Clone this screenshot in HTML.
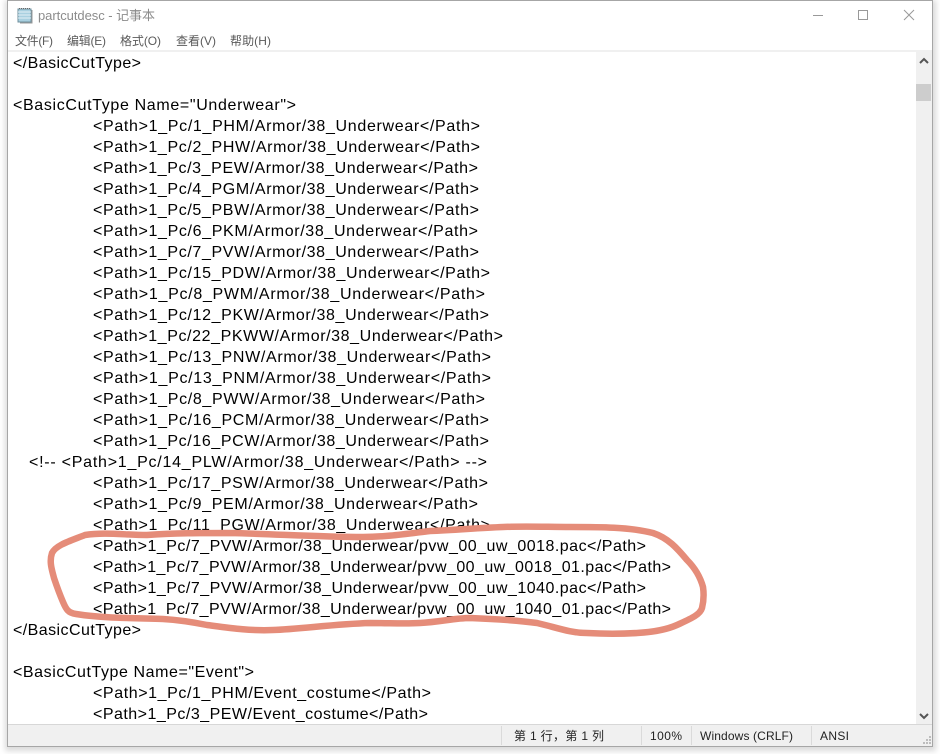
<!DOCTYPE html>
<html><head><meta charset="utf-8"><style>
html,body{margin:0;padding:0;width:940px;height:754px;overflow:hidden;background:#fff}
svg{position:absolute;left:0;top:0}
text{font-family:"Liberation Sans","Noto Sans CJK SC",sans-serif;white-space:pre}
.c{font-size:16px;fill:#000}
.m{font-size:12px;fill:#5a5a5a}
.s{font-size:12px;fill:#222}
</style></head><body>
<svg width="940" height="754" viewBox="0 0 940 754" xmlns="http://www.w3.org/2000/svg">
<defs><filter id="sh" x="-3%" y="-3%" width="106%" height="106%"><feGaussianBlur stdDeviation="3"/></filter></defs>
<rect x="5" y="0" width="931" height="751" fill="#bbb" opacity=".55" filter="url(#sh)"/>
<rect x="7.5" y="0.5" width="925" height="746" fill="#fff" stroke="#a6a6a6"/>
<rect x="8" y="50" width="924" height="2" fill="#f0f0f0"/>
<g>
<rect x="18" y="9" width="13" height="13" fill="#a9d0e0" stroke="#6f8f9c"/>
<path d="M18 12H31M18 15H31M18 18H31" stroke="#e4f1f6"/>
<path d="M19 8.5H30" stroke="#666" stroke-dasharray="1 1"/>
<path d="M32 10V23H20" stroke="#999" fill="none"/>
</g>
<text x="38" y="20" font-size="13" fill="#8c8c8c" textLength="117">partcutdesc - 记事本</text>
<path d="M813 15.5H823" stroke="#999"/>
<rect x="858.5" y="10.5" width="9" height="9" fill="none" stroke="#999"/>
<path d="M904 10L914 20M914 10L904 20" stroke="#999"/>
<text class="m" x="15" y="45" textLength="38">文件(F)</text>
<text class="m" x="67" y="45" textLength="39">编辑(E)</text>
<text class="m" x="120" y="45" textLength="41">格式(O)</text>
<text class="m" x="176" y="45" textLength="40">查看(V)</text>
<text class="m" x="230" y="45" textLength="41">帮助(H)</text>

<g transform="translate(0,1)">
<text class="c" x="13" y="67" textLength="128">&lt;/BasicCutType&gt;</text>
<text class="c" x="13" y="109" textLength="283">&lt;BasicCutType Name="Underwear"&gt;</text>
<text class="c" x="93" y="130" textLength="387">&lt;Path&gt;1_Pc/1_PHM/Armor/38_Underwear&lt;/Path&gt;</text>
<text class="c" x="93" y="151" textLength="387">&lt;Path&gt;1_Pc/2_PHW/Armor/38_Underwear&lt;/Path&gt;</text>
<text class="c" x="93" y="172" textLength="385">&lt;Path&gt;1_Pc/3_PEW/Armor/38_Underwear&lt;/Path&gt;</text>
<text class="c" x="93" y="193" textLength="386">&lt;Path&gt;1_Pc/4_PGM/Armor/38_Underwear&lt;/Path&gt;</text>
<text class="c" x="93" y="214" textLength="386">&lt;Path&gt;1_Pc/5_PBW/Armor/38_Underwear&lt;/Path&gt;</text>
<text class="c" x="93" y="235" textLength="385">&lt;Path&gt;1_Pc/6_PKM/Armor/38_Underwear&lt;/Path&gt;</text>
<text class="c" x="93" y="256" textLength="386">&lt;Path&gt;1_Pc/7_PVW/Armor/38_Underwear&lt;/Path&gt;</text>
<text class="c" x="93" y="277" textLength="397">&lt;Path&gt;1_Pc/15_PDW/Armor/38_Underwear&lt;/Path&gt;</text>
<text class="c" x="93" y="298" textLength="392">&lt;Path&gt;1_Pc/8_PWM/Armor/38_Underwear&lt;/Path&gt;</text>
<text class="c" x="93" y="319" textLength="396">&lt;Path&gt;1_Pc/12_PKW/Armor/38_Underwear&lt;/Path&gt;</text>
<text class="c" x="93" y="340" textLength="410">&lt;Path&gt;1_Pc/22_PKWW/Armor/38_Underwear&lt;/Path&gt;</text>
<text class="c" x="93" y="361" textLength="398">&lt;Path&gt;1_Pc/13_PNW/Armor/38_Underwear&lt;/Path&gt;</text>
<text class="c" x="93" y="382" textLength="398">&lt;Path&gt;1_Pc/13_PNM/Armor/38_Underwear&lt;/Path&gt;</text>
<text class="c" x="93" y="403" textLength="392">&lt;Path&gt;1_Pc/8_PWW/Armor/38_Underwear&lt;/Path&gt;</text>
<text class="c" x="93" y="424" textLength="396">&lt;Path&gt;1_Pc/16_PCM/Armor/38_Underwear&lt;/Path&gt;</text>
<text class="c" x="93" y="445" textLength="396">&lt;Path&gt;1_Pc/16_PCW/Armor/38_Underwear&lt;/Path&gt;</text>
<text class="c" x="29" y="466" textLength="458">&lt;!-- &lt;Path&gt;1_Pc/14_PLW/Armor/38_Underwear&lt;/Path&gt; --&gt;</text>
<text class="c" x="93" y="487" textLength="395">&lt;Path&gt;1_Pc/17_PSW/Armor/38_Underwear&lt;/Path&gt;</text>
<text class="c" x="93" y="508" textLength="385">&lt;Path&gt;1_Pc/9_PEM/Armor/38_Underwear&lt;/Path&gt;</text>
<text class="c" x="93" y="529" textLength="397">&lt;Path&gt;1_Pc/11_PGW/Armor/38_Underwear&lt;/Path&gt;</text>
<text class="c" x="93" y="550" textLength="553">&lt;Path&gt;1_Pc/7_PVW/Armor/38_Underwear/pvw_00_uw_0018.pac&lt;/Path&gt;</text>
<text class="c" x="93" y="571" textLength="578">&lt;Path&gt;1_Pc/7_PVW/Armor/38_Underwear/pvw_00_uw_0018_01.pac&lt;/Path&gt;</text>
<text class="c" x="93" y="592" textLength="553">&lt;Path&gt;1_Pc/7_PVW/Armor/38_Underwear/pvw_00_uw_1040.pac&lt;/Path&gt;</text>
<text class="c" x="93" y="613" textLength="578">&lt;Path&gt;1_Pc/7_PVW/Armor/38_Underwear/pvw_00_uw_1040_01.pac&lt;/Path&gt;</text>
<text class="c" x="13" y="634" textLength="128">&lt;/BasicCutType&gt;</text>
<text class="c" x="13" y="676" textLength="241">&lt;BasicCutType Name="Event"&gt;</text>
<text class="c" x="93" y="697" textLength="338">&lt;Path&gt;1_Pc/1_PHM/Event_costume&lt;/Path&gt;</text>
<text class="c" x="93" y="718" textLength="335">&lt;Path&gt;1_Pc/3_PEW/Event_costume&lt;/Path&gt;</text>
</g>

<path d="M85 535C70 541 56 545 52 553C49 562 52 570 54 578C57 587 60 595 63 602C66 609 68 613 76 614C100 618 130 618 163 619C180 620 192 622 207 625C230 628 250 631 273 630C300 629 335 624 370 623C390 623 405 624 420 623C440 622 455 618 470 618C495 619 515 620 537 623C555 627 570 633 587 633C605 634 620 634 637 633C655 632 668 629 677 625C690 619 700 615 702 608C704 600 704 594 703 587C700 576 695 568 687 560C677 548 668 538 653 533C630 527 600 527 570 527C548 527 525 526 503 527C478 528 455 530 430 531C405 534 385 537 363 537C320 537 275 534 230 533C200 533 175 533 147 535C125 535 105 532 85 535Z" fill="none" stroke="#e58c79" stroke-width="6.5" stroke-linejoin="round"/>

<rect x="916" y="52" width="16" height="672" fill="#f0f0f0"/>
<path d="M920 63L924 59L928 63" fill="none" stroke="#555" stroke-width="2"/>
<rect x="916" y="84" width="15" height="17" fill="#cdcdcd"/>
<path d="M920 714L924 718L928 714" fill="none" stroke="#555" stroke-width="2"/>

<rect x="8" y="724" width="924" height="22" fill="#f0f0f0"/>
<rect x="8" y="724" width="924" height="1" fill="#d7d7d7"/>
<path d="M501.5 726V745M641.5 726V745M691.5 726V745M811.5 726V745" stroke="#dadada"/>
<text class="s" x="514" y="740" textLength="90">第 1 行，第 1 列</text>
<text class="s" x="650" y="740" textLength="32">100%</text>
<text class="s" x="700" y="740" textLength="93">Windows (CRLF)</text>
<text class="s" x="820" y="740" textLength="29">ANSI</text>
<path d="M929 736h2v2h-2zM926 739h2v2h-2zM929 739h2v2h-2zM923 742h2v2h-2zM926 742h2v2h-2zM929 742h2v2h-2z" fill="#bdbdbd"/>
</svg>
</body></html>
